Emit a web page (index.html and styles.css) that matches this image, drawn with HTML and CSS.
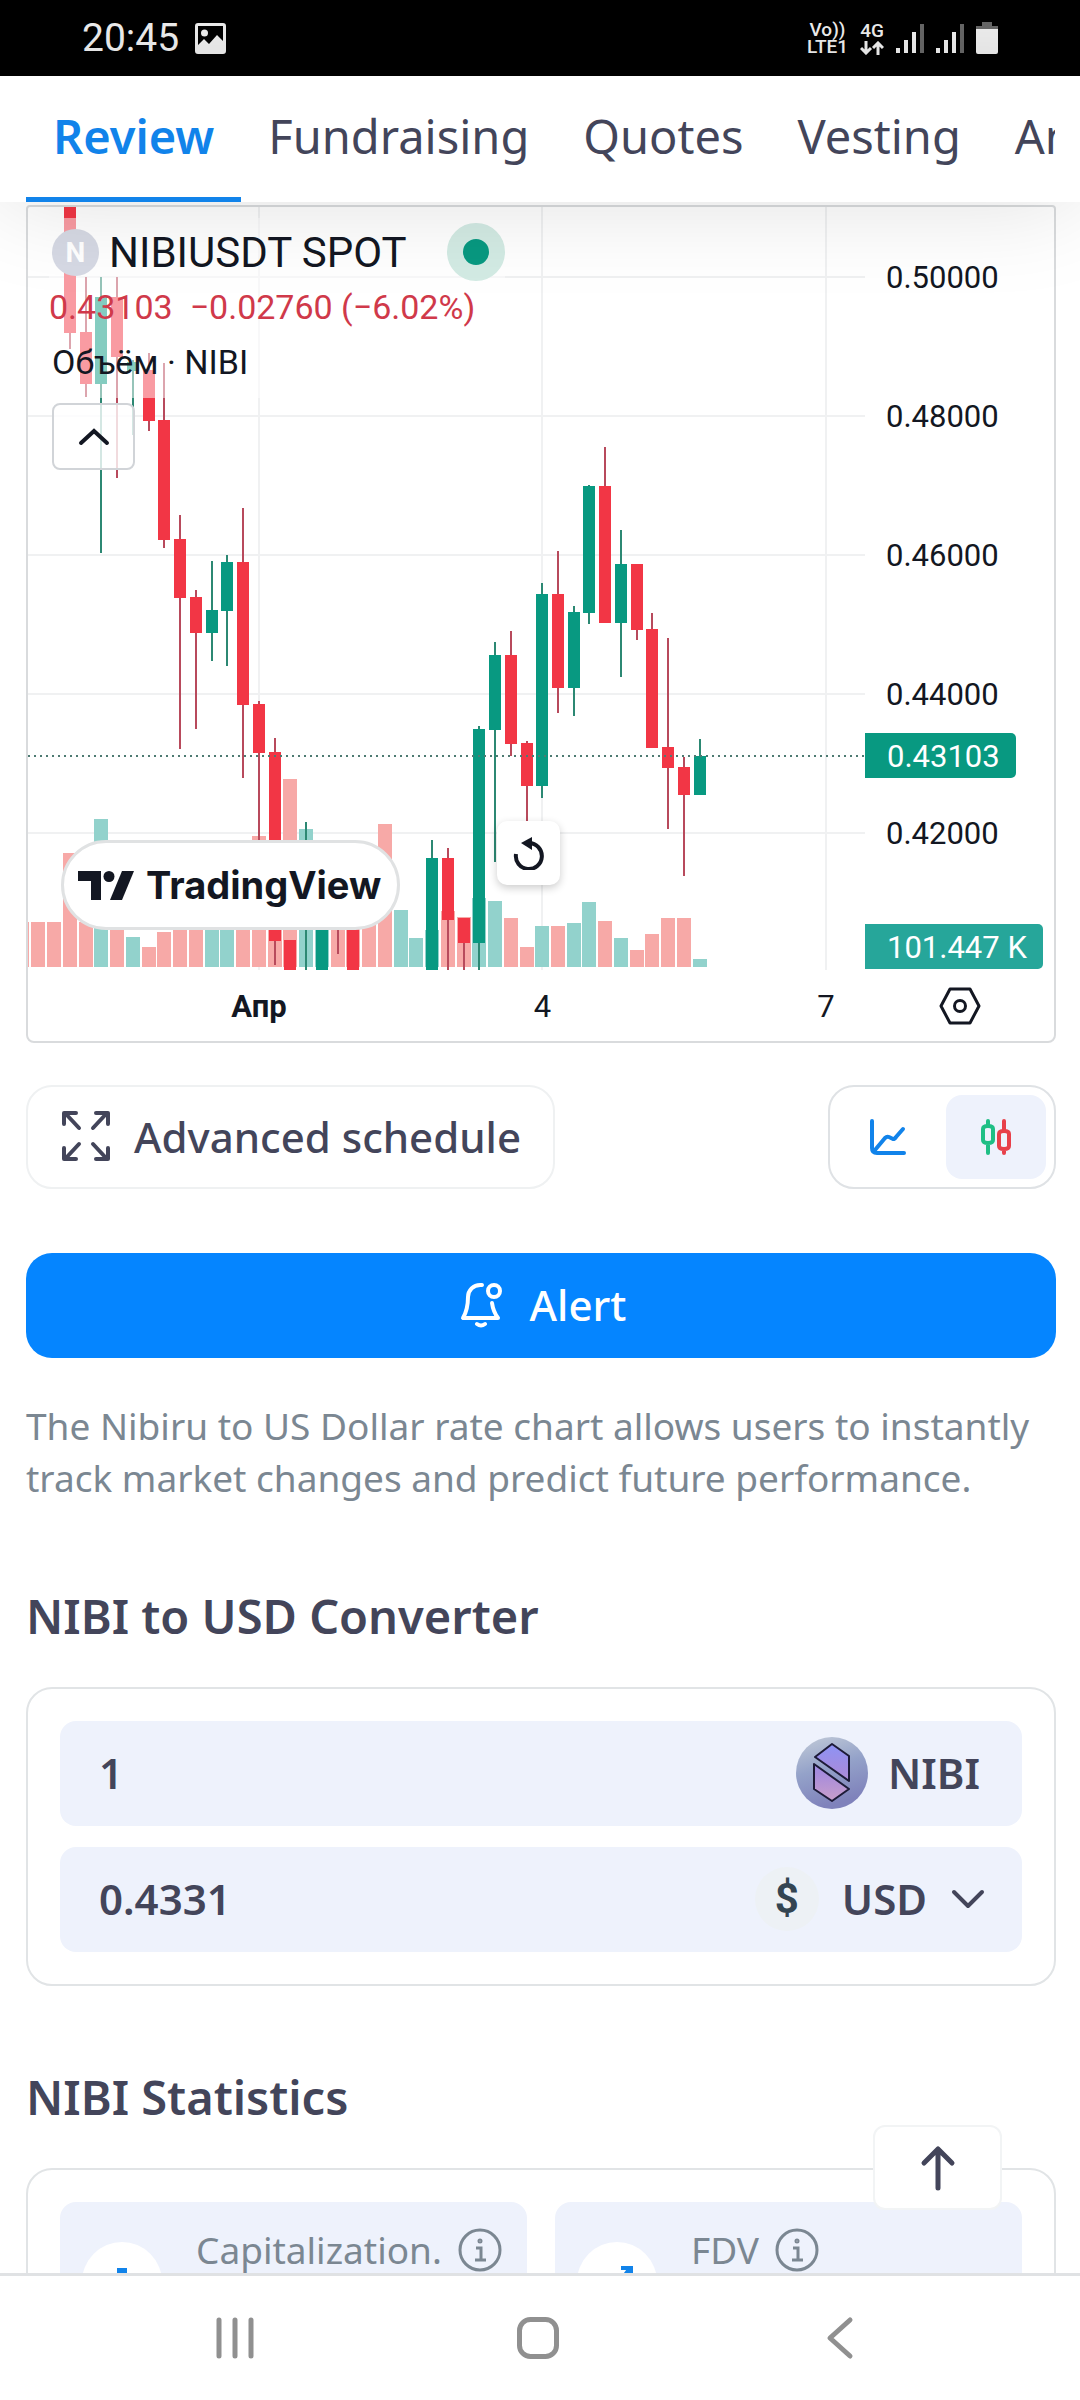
FILE: index.html
```html
<!DOCTYPE html>
<html lang="en">
<head>
<meta charset="utf-8">
<meta name="viewport" content="width=device-width, initial-scale=1">
<title>Nibiru (NIBI) price</title>
<link rel="stylesheet" href="styles.css">
</head>
<body>
<div class="screen">
  <header class="statusbar">
    <div class="status-group">
      <span class="clock">20:45</span>
      <svg class="status-photo" viewBox="0 0 31 31" aria-hidden="true"><path fill-rule="evenodd" fill="#eee" d="M3 0h25a3 3 0 0 1 3 3v25a3 3 0 0 1-3 3H3a3 3 0 0 1-3-3V3a3 3 0 0 1 3-3zM3 3v19l6-6 5 5 8-9 6 6V3z"/><circle cx="9.500" cy="10" r="3.500" fill="#eee"/></svg>
    </div>
    <div class="status-group status-right">
      <span class="volte"><span>Vo))</span><span>LTE1</span></span>
      <span class="network"><span>4G</span>
        <svg viewBox="0 0 24 14" width="24" height="14" fill="none" stroke="#eee" stroke-width="3" aria-hidden="true"><path d="M6 0v12M1 7l5 5 5-5M18 14V2M13 7l5-5 5 5"/></svg>
      </span>
      <svg class="signal" viewBox="0 0 28 31" aria-hidden="true"><path d="M2 25v5M10 17v13M18 9v21" stroke="#eee" stroke-width="4"/><path d="M26 1v29" stroke="#666" stroke-width="4"/></svg>
      <svg class="signal" viewBox="0 0 28 31" aria-hidden="true"><path d="M2 25v5M10 17v13M18 9v21" stroke="#eee" stroke-width="4"/><path d="M26 1v29" stroke="#666" stroke-width="4"/></svg>
      <svg class="battery" viewBox="0 0 22 33" aria-hidden="true"><path fill="#666" d="M6 0h10v4h6v5H0V4h6z"/><path fill="#eee" d="M0 7h22v23a2 2 0 0 1-2 2H2a2 2 0 0 1-2-2z"/></svg>
    </div>
  </header>

  <nav class="tabs" aria-label="Sections">
    <div class="tabs-scroll">
      <a class="tab tab-active" href="#review">Review</a>
      <a class="tab" href="#fundraising">Fundraising</a>
      <a class="tab" href="#quotes">Quotes</a>
      <a class="tab" href="#vesting">Vesting</a>
      <a class="tab" href="#analytics">Analytics</a>
    </div>
  </nav>

  <main class="content">
    <section class="chart" id="review" aria-label="NIBIUSDT chart">
      <svg class="plot" viewBox="28 207 837 763" preserveAspectRatio="none" aria-hidden="true">
        <path class="grid" d="M28 277H865M28 416H865M28 555H865M28 694H865M28 833H865M259 207V970M542 207V970M826 207V970"/>
        <path class="vol-down" d="M28 922h1v45h-1zM31 922h14v45h-14zM47 922h14v45h-14zM63 853h14v114h-14zM79 922h14v45h-14zM110 915h14v52h-14zM142 947h14v20h-14zM157 932h14v35h-14zM173 925h14v42h-14zM189 920h14v47h-14zM236 915h14v52h-14zM252 836h14v131h-14zM268 920h14v47h-14zM283 779h14v188h-14zM331 900h14v67h-14zM346 915h14v52h-14zM362 900h14v67h-14zM378 824h14v143h-14zM441 911h14v56h-14zM457 917h14v50h-14zM504 918h14v49h-14zM520 947h14v20h-14zM551 926h14v41h-14zM598 921h14v46h-14zM630 950h14v17h-14zM645 934h14v33h-14zM661 918h14v49h-14zM677 918h14v49h-14z"/>
        <path class="vol-up" d="M94 819h14v148h-14zM126 937h14v30h-14zM205 920h14v47h-14zM220 920h14v47h-14zM299 829h14v138h-14zM315 915h14v52h-14zM394 910h14v57h-14zM409 938h14v29h-14zM425 930h14v37h-14zM472 898h14v69h-14zM488 901h14v66h-14zM535 926h14v41h-14zM567 923h14v44h-14zM582 902h14v65h-14zM614 938h14v29h-14zM693 959h14v8h-14z"/>
        <path class="wick-down" d="M70 333V349M86 277V397M117 277V478M149 353V431M164 363V548M180 515V749M196 590V729M243 508V778M259 701V850M275 738V965M338 925V954M448 848V970M464 918V970M511 631V756M527 741V822M558 551V713M605 447V623M637 564V640M652 613V748M668 638V829M684 757V876"/>
        <path class="wick-up" d="M101 277V553M133 360V435M212 561V661M227 555V666M306 822V970M432 840V970M479 726V970M495 642V862M542 583V798M574 606V716M589 485V624M621 530V677M700 739V795"/>
        <path class="body-down" d="M64 207h12v126h-12zM80 332h12v52h-12zM111 297h12v60h-12zM143 370h12v51h-12zM158 420h12v120h-12zM174 539h12v59h-12zM190 597h12v36h-12zM237 562h12v143h-12zM253 704h12v49h-12zM269 752h12v189h-12zM284 940h12v30h-12zM347 920h12v50h-12zM442 858h12v62h-12zM458 918h12v25h-12zM505 655h12v89h-12zM521 743h12v43h-12zM552 594h12v94h-12zM599 486h12v137h-12zM631 564h12v66h-12zM646 629h12v119h-12zM662 747h12v21h-12zM678 767h12v28h-12z"/>
        <path class="body-up" d="M95 297h12v87h-12zM127 362h12v9h-12zM206 610h12v23h-12zM221 562h12v49h-12zM316 920h12v50h-12zM426 858h12v112h-12zM473 729h12v214h-12zM489 655h12v75h-12zM536 594h12v192h-12zM568 612h12v76h-12zM583 486h12v127h-12zM615 564h12v59h-12zM694 756h12v39h-12z"/>
        <path class="last-price" d="M28 756H865"/>
      </svg>

      <div class="price-axis">
        <span>0.50000</span>
        <span>0.48000</span>
        <span>0.46000</span>
        <span>0.44000</span>
        <span>0.42000</span>
        <span class="tag tag-price">0.43103</span>
        <span class="tag tag-volume">101.447 K</span>
      </div>

      <div class="time-axis">
        <span class="month">Апр</span>
        <span>4</span>
        <span>7</span>
      </div>
      <button class="axis-settings" type="button" aria-label="Chart settings">
        <svg viewBox="0 0 42 38" width="42" height="38" fill="none" stroke="#131722" stroke-width="3" stroke-linejoin="round"><path d="M11 2h20l9 17-9 17H11L2 19z"/><circle cx="21" cy="19" r="5.500"/></svg>
      </button>

      <div class="legend">
        <div class="legend-title">
          <span class="symbol-logo">N</span>
          <span class="symbol-name">NIBIUSDT SPOT</span>
          <span class="market-dot"></span>
        </div>
        <div class="legend-values"><span>0.43103</span><span>−0.02760 (−6.02%)</span></div>
        <div class="legend-volume">Объём · NIBI</div>
      </div>
      <button class="legend-toggle" type="button" aria-label="Collapse legend">
        <svg viewBox="0 0 32 18" width="32" height="18" fill="none" stroke="#131722" stroke-width="4" stroke-linecap="round"><path d="M3 15L16 3l13 12"/></svg>
      </button>
      <a class="tv-badge" href="#tradingview">
        <svg viewBox="0 0 56 29" width="56" height="29" fill="#131722" aria-hidden="true"><path d="M0 0h23v29H13V10H0z"/><circle cx="31" cy="5.500" r="5.500"/><path d="M44 0h12L44 29H32z"/></svg>
        <span>TradingView</span>
      </a>
      <button class="reset-chart" type="button" aria-label="Reset chart">
        <svg viewBox="0 0 32 34" width="32" height="34"><path d="M3 18a13 13 0 1 0 13-11" fill="none" stroke="#131722" stroke-width="4"/><path d="M8 7l11-6v13z" fill="#131722"/></svg>
      </button>
    </section>

    <div class="chart-controls">
      <button class="advanced" type="button">
        <svg viewBox="0 0 48 52" width="48" height="52" fill="none" stroke="#43455a" stroke-width="4" stroke-linecap="round" stroke-linejoin="round" aria-hidden="true"><path d="M2 14V3h12M3 3l14 15M34 3h12v11M45 3L31 18M2 38v11h12M3 49l14-15M34 49h12V38M45 49L31 34"/></svg>
        <span>Advanced schedule</span>
      </button>
      <div class="chart-type">
        <button class="type-btn" type="button" aria-label="Line chart">
          <svg viewBox="0 0 36 36" width="36" height="36" fill="none" stroke="#1183ea" stroke-width="4" stroke-linecap="round" stroke-linejoin="round"><path d="M2 2v27q0 5 5 5h27"/><path d="M5 31l10-12q2-2 4-1l4 2q2 0 3-2l7-8"/></svg>
        </button>
        <button class="type-btn type-active" type="button" aria-label="Candlestick chart" aria-pressed="true">
          <svg viewBox="0 0 34 36" width="34" height="36" fill="none" stroke-width="4" stroke-linecap="round" stroke-linejoin="round"><path stroke="#1fbf85" d="M9 2v5M9 24v10M4 10q0-3 5-3t5 3v11q0 3-5 3t-5-3z"/><path stroke="#e8404a" d="M25 2v10M25 30v4M20 15q0-3 5-3t5 3v12q0 3-5 3t-5-3z"/></svg>
        </button>
      </div>
    </div>

    <button class="alert" type="button">
      <svg viewBox="0 0 42 46" width="42" height="46" fill="none" stroke="#fff" stroke-width="4" stroke-linecap="round" stroke-linejoin="round" aria-hidden="true"><path d="M22 3C13 2 8 9 8 15c0 9-1 14-5 21h35c-3-4-5-8-6-15"/><circle cx="34" cy="9" r="6"/><path d="M17 42q4 3 8 0"/></svg>
      <span>Alert</span>
    </button>

    <p class="note">The Nibiru to US Dollar rate chart allows users to instantly track market changes and predict future performance.</p>

    <h2 class="heading">NIBI to USD Converter</h2>
    <section class="card converter">
      <div class="field">
        <input class="amount" type="text" inputmode="decimal" value="1" aria-label="Amount in NIBI">
        <span class="currency currency-nibi">
          <svg viewBox="0 0 72 72" width="72" height="72" aria-hidden="true">
            <defs>
              <linearGradient id="coin" x1="0" y1="0" x2="0.300" y2="1"><stop offset="0" stop-color="#c3ccd8"/><stop offset="0.500" stop-color="#94a2c9"/><stop offset="1" stop-color="#7f82bb"/></linearGradient>
              <linearGradient id="mark" x1="0" y1="0" x2="0" y2="1"><stop offset="0" stop-color="#8d93f5"/><stop offset="0.500" stop-color="#a68bdc"/><stop offset="1" stop-color="#c99fcb"/></linearGradient>
            </defs>
            <circle cx="36" cy="36" r="36" fill="url(#coin)"/>
            <path d="M36 7l17 12v25L19 20zM18 27l35 25-17 12-18-12z" fill="url(#mark)" stroke="#1d1b38" stroke-width="2" stroke-linejoin="round"/>
          </svg>
          <span>NIBI</span>
        </span>
      </div>
      <div class="field">
        <input class="amount" type="text" inputmode="decimal" value="0.4331" aria-label="Amount in USD">
        <button class="currency currency-usd" type="button">
          <span class="dollar">$</span>
          <span>USD</span>
          <svg viewBox="0 0 36 22" width="36" height="22" fill="none" stroke="#43455a" stroke-width="4" stroke-linecap="round" stroke-linejoin="round" aria-hidden="true"><path d="M4 4l14 14L32 4"/></svg>
        </button>
      </div>
    </section>

    <h2 class="heading">NIBI Statistics</h2>
    <section class="card stats">
      <div class="stat">
        <span class="stat-icon"><svg viewBox="0 0 40 32" width="40" height="32" fill="#1183ea" aria-hidden="true"><path d="M15 2h10v30H15zM0 14h10v18H0zM30 10h10v22H30z"/></svg></span>
        <span class="stat-label">Capitalization.
          <svg class="info" viewBox="0 0 44 44" width="44" height="44" fill="none" stroke="#7b8792" stroke-width="3" aria-hidden="true"><circle cx="22" cy="22" r="20"/><path d="M18 20h5v12M17 32h11"/><circle cx="22" cy="13" r="1" stroke-width="3"/></svg>
        </span>
      </div>
      <div class="stat">
        <span class="stat-icon"><svg viewBox="0 0 40 40" width="40" height="40" fill="none" stroke="#1183ea" stroke-width="4" aria-hidden="true"><path d="M2 34l10-12 6 5L33 6M24 6h10v8"/></svg></span>
        <span class="stat-label">FDV
          <svg class="info" viewBox="0 0 44 44" width="44" height="44" fill="none" stroke="#7b8792" stroke-width="3" aria-hidden="true"><circle cx="22" cy="22" r="20"/><path d="M18 20h5v12M17 32h11"/><circle cx="22" cy="13" r="1" stroke-width="3"/></svg>
        </span>
      </div>
    </section>
  </main>

  <footer class="bottom">
    <button class="to-top" type="button" aria-label="Back to top">
      <svg viewBox="0 0 36 46" width="36" height="46" fill="none" stroke="#43455a" stroke-width="5" stroke-linecap="round" stroke-linejoin="round"><path d="M18 43V4M4 18L18 4l14 14"/></svg>
    </button>
    <nav class="navbar" aria-label="System navigation">
      <button class="nav-btn" type="button" aria-label="Recent apps"><svg viewBox="0 0 44 44" width="44" height="44" stroke="#909090" stroke-width="5" stroke-linecap="round"><path d="M6 4v36M22 4v36M38 4v36"/></svg></button>
      <button class="nav-btn" type="button" aria-label="Home"><svg viewBox="0 0 44 44" width="44" height="44" fill="none" stroke="#909090" stroke-width="5"><rect x="3.500" y="3.500" width="37" height="37" rx="11"/></svg></button>
      <button class="nav-btn" type="button" aria-label="Back"><svg viewBox="0 0 44 44" width="44" height="44" fill="none" stroke="#909090" stroke-width="5" stroke-linecap="round" stroke-linejoin="round"><path d="M32 4L12 22l20 18"/></svg></button>
    </nav>
  </footer>
</div>
</body>
</html>
```

FILE: styles.css
```css
* { box-sizing: border-box; }

body {
  margin: 0;
  background: #fff;
  color: #43455a;
  font-family: "Noto Sans", sans-serif;
}

button {
  margin: 0;
  padding: 0;
  border: 0;
  background: none;
  color: inherit;
  font: inherit;
  cursor: pointer;
}

a { color: inherit; text-decoration: none; }
svg { display: block; flex: none; }

.screen {
  display: flex;
  flex-direction: column;
  height: 100vh;
  overflow: hidden;
}

/* System status bar */
.statusbar {
  flex: none;
  display: flex;
  align-items: center;
  justify-content: space-between;
  height: 76px;
  padding: 0 82px;
  background: #000;
  color: #eee;
  font-family: Roboto, sans-serif;
}
.status-group { display: flex; align-items: center; gap: 16px; }
.clock { font-size: 39px; line-height: 76px; }
.status-photo { width: 31px; height: 31px; }
.status-right { gap: 12px; }
.volte, .network {
  display: flex;
  flex-direction: column;
  align-items: center;
  font-size: 19px;
  font-weight: 500;
  line-height: 17px;
}
.network svg { margin-top: 2px; }
.signal { width: 28px; height: 31px; }
.battery { width: 22px; height: 33px; }

/* Section tabs */
.tabs {
  flex: none;
  position: relative;
  z-index: 2;
  padding: 0 25px 0 26px;
  background: #fff;
  box-shadow: 0 0 100px rgba(0, 0, 0, 0.13);
}
.tabs-scroll { display: flex; overflow: hidden; }
.tab {
  flex: none;
  height: 126px;
  padding: 0 27px;
  border-bottom: 5px solid transparent;
  font-size: 47px;
  line-height: 120px;
}
.tab-active {
  border-color: #1183ea;
  color: #1183ea;
  font-weight: 600;
}

.content {
  flex: 1;
  min-height: 0;
  overflow: hidden;
  padding: 3px 24px 0 26px;
}

/* Chart widget */
.chart {
  position: relative;
  display: grid;
  grid-template-columns: 1fr 189px;
  border: 2px solid #d9dbdd;
  border-radius: 4px 4px 8px 8px;
  color: #131722;
  font-family: Roboto, sans-serif;
  font-size: 32px;
}
.plot { width: 100%; height: 763px; }
.grid { fill: none; stroke: #f0f1f2; stroke-width: 2; }
.vol-down { fill: #f7a9a7; }
.vol-up { fill: #92d2cc; }
.wick-down { stroke: #b84a5c; stroke-width: 2; }
.wick-up { stroke: #2c8873; stroke-width: 2; }
.body-down { fill: #f23645; }
.body-up { fill: #089981; }
.last-price { stroke: #4d7a72; stroke-width: 2; stroke-dasharray: 2 4; }

.price-axis {
  position: relative;
  display: flex;
  flex-direction: column;
  gap: 99px;
  padding: 51px 0 0 21px;
  font-size: 31px;
  line-height: 40px;
}
.tag {
  position: absolute;
  left: 0;
  height: 45px;
  padding: 0 16px 0 22px;
  border-radius: 0 5px 5px 0;
  color: #fff;
  line-height: 47px;
}
.tag-price { top: 526px; background: #089981; }
.tag-volume { top: 717px; background: #26a69a; }

.time-axis {
  display: flex;
  justify-content: space-between;
  padding: 3px 0 0 192px;
  font-size: 31px;
  line-height: 68px;
}
.time-axis span { width: 78px; text-align: center; }
.month { font-weight: 700; }
.axis-settings {
  display: flex;
  align-items: center;
  justify-content: center;
  height: 71px;
}

.legend {
  position: absolute;
  top: 11px;
  left: 21px;
  display: flex;
  flex-direction: column;
  height: 180px;
  background: rgba(255, 255, 255, 0.5);
}
.legend-title, .legend-volume { padding-left: 3px; }
.legend-title {
  display: flex;
  align-items: center;
  height: 68px;
  font-size: 42px;
}
.symbol-logo {
  width: 47px;
  height: 47px;
  border-radius: 50%;
  background: #d6d9e4;
  color: #fff;
  font-size: 28px;
  font-weight: 700;
  line-height: 47px;
  text-align: center;
}
.symbol-name { margin-left: 10px; }
.market-dot {
  width: 58px;
  height: 58px;
  margin-left: 40px;
  border: 16px solid #d3ebe4;
  border-radius: 50%;
  background: #089981;
}
.legend-values {
  display: flex;
  gap: 17px;
  color: #d0394a;
  font-size: 34px;
  line-height: 42px;
}
.legend-volume { padding-top: 12px; font-size: 34px; line-height: 44px; }
.legend-toggle {
  position: absolute;
  top: 196px;
  left: 24px;
  display: flex;
  align-items: center;
  justify-content: center;
  width: 83px;
  height: 67px;
  border: 2px solid #d1d4d8;
  border-radius: 8px;
  background: rgba(255, 255, 255, 0.8);
}
.tv-badge {
  position: absolute;
  bottom: 111px;
  left: 33px;
  display: flex;
  align-items: center;
  gap: 12px;
  height: 90px;
  padding: 0 16px 0 14px;
  border: 3px solid #e0e2e3;
  border-radius: 45px;
  background: #fff;
  font-family: Inter, sans-serif;
  font-size: 38px;
  font-weight: 700;
}
.reset-chart {
  position: absolute;
  bottom: 156px;
  left: 469px;
  display: flex;
  align-items: center;
  justify-content: center;
  width: 63px;
  height: 64px;
  border-radius: 10px;
  background: #fff;
  box-shadow: 0 3px 8px rgba(0, 0, 0, 0.2);
}

/* Buttons under the chart */
.chart-controls {
  display: flex;
  justify-content: space-between;
  margin-top: 42px;
}
.advanced {
  display: flex;
  align-items: center;
  gap: 24px;
  height: 104px;
  padding: 0 32px 2px 34px;
  border: 2px solid #eff1f2;
  border-radius: 26px;
  font-size: 42px;
  font-weight: 500;
}
.chart-type {
  display: flex;
  gap: 8px;
  height: 104px;
  padding: 8px;
  border: 2px solid #dfe2e5;
  border-radius: 26px;
}
.type-btn {
  display: flex;
  align-items: center;
  justify-content: center;
  width: 100px;
  border-radius: 16px;
}
.type-active { background: #eef2fc; }
.alert {
  display: flex;
  align-items: center;
  justify-content: center;
  gap: 28px;
  width: 100%;
  height: 105px;
  margin-top: 64px;
  padding: 0 0 2px 4px;
  border-radius: 26px;
  background: #0585ff;
  color: #fff;
  font-size: 42px;
  font-weight: 500;
}
.note {
  margin: 42px 0 80px;
  color: #7b8792;
  font-size: 37px;
  line-height: 52px;
}
.heading {
  margin: 0 0 39px;
  font-size: 47px;
  font-weight: 600;
  line-height: 64px;
}

/* Cards */
.card {
  padding: 32px;
  border: 2px solid #e1e4e6;
  border-radius: 26px;
}
.converter {
  display: flex;
  flex-direction: column;
  gap: 21px;
  margin-bottom: 79px;
}
.field {
  display: flex;
  align-items: center;
  justify-content: space-between;
  height: 105px;
  padding: 0 42px 2px 39px;
  border-radius: 16px;
  background: #eef2fc;
  font-size: 42px;
  font-weight: 600;
}
.amount {
  flex: 1;
  min-width: 0;
  padding: 0;
  border: 0;
  background: none;
  color: inherit;
  font: inherit;
}
.currency { display: flex; align-items: center; }
.currency-nibi { gap: 20px; }
.currency-usd { gap: 23px; margin-right: -6px; }
.dollar {
  width: 64px;
  height: 64px;
  border-radius: 50%;
  background: #edf1f5;
  color: #344552;
  font-family: Roboto, sans-serif;
  font-size: 42px;
  font-weight: 700;
  line-height: 64px;
  text-align: center;
}
.stats {
  display: grid;
  grid-template-columns: 1fr 1fr;
  gap: 28px;
}
.stat {
  display: flex;
  align-items: flex-start;
  gap: 34px;
  height: 160px;
  padding: 23px 22px;
  border-radius: 16px;
  background: #eef2fc;
}
.stat-icon {
  display: flex;
  align-items: center;
  justify-content: center;
  width: 80px;
  height: 80px;
  margin-top: 17px;
  border-radius: 50%;
  background: #fff;
}
.stat-label {
  display: flex;
  align-items: center;
  gap: 16px;
  color: #7b8792;
  font-size: 37px;
  line-height: 50px;
}

/* System navigation */
.bottom { flex: none; position: relative; z-index: 2; }
.to-top {
  position: absolute;
  right: 78px;
  bottom: 190px;
  display: flex;
  align-items: center;
  justify-content: center;
  width: 129px;
  height: 85px;
  border: 2px solid #f2f4f5;
  border-radius: 12px;
  background: #fff;
}
.navbar {
  display: flex;
  justify-content: space-between;
  height: 127px;
  padding: 0 218px 0 213px;
  border-top: 3px solid #e0e2e4;
  background: #fff;
}
.nav-btn { display: flex; align-items: center; }
```
